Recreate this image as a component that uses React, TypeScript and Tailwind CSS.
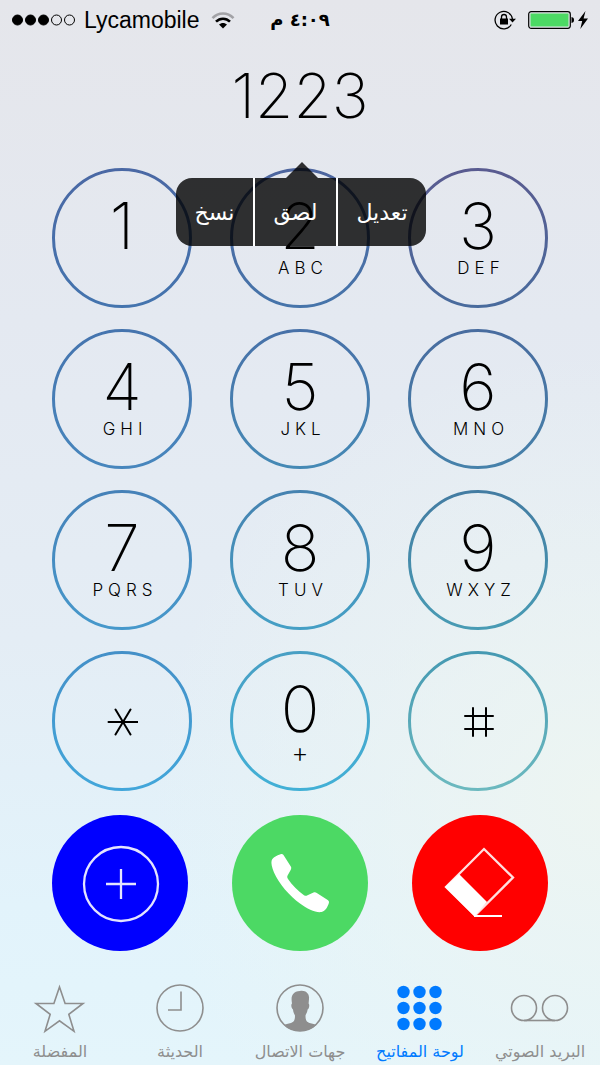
import clsx from 'clsx'
import type { ReactNode } from 'react'

type Key = {
  digit: string
  letters?: string
  top: string
  bottom: string
  label?: string
  symbol?: ReactNode
}

const StarSymbol = () => (
  <svg className="h-8 w-8" viewBox="0 0 32 32" stroke="currentColor" strokeWidth="2" strokeLinecap="round" aria-hidden="true">
    <path d="M2.5 17h29M9.500 4.500l15 25M24.500 4.500l-15 25" />
  </svg>
)

const HashSymbol = () => (
  <svg className="h-8 w-8" viewBox="0 0 32 32" stroke="currentColor" strokeWidth="2" strokeLinecap="round" aria-hidden="true">
    <path d="M3 11h28M3 24h28M11 3v28M24 3v28" />
  </svg>
)

const keys: Key[] = [
  { digit: '1', top: '#4a68a4', bottom: '#4474ae' },
  { digit: '2', letters: 'ABC', top: '#4d659e', bottom: '#4674aa' },
  { digit: '3', letters: 'DEF', top: '#595b90', bottom: '#496b9d' },
  { digit: '4', letters: 'GHI', top: '#4574ae', bottom: '#4786bd' },
  { digit: '5', letters: 'JKL', top: '#4771a8', bottom: '#4589b5' },
  { digit: '6', letters: 'MNO', top: '#486c9f', bottom: '#4681aa' },
  { digit: '7', letters: 'PQRS', top: '#4581b8', bottom: '#4698cb' },
  { digit: '8', letters: 'TUV', top: '#4582b0', bottom: '#459fc5' },
  { digit: '9', letters: 'WXYZ', top: '#437ca2', bottom: '#489bb4' },
  { digit: '*', label: 'star', top: '#4490c8', bottom: '#42a6da', symbol: <StarSymbol /> },
  { digit: '0', letters: '+', top: '#489fc4', bottom: '#42b0d6' },
  { digit: '#', label: 'hash', top: '#4599b2', bottom: '#6cb9bf', symbol: <HashSymbol /> },
]

function KeyButton({ item, index }: { item: Key; index: number }) {
  const id = `ring-${index}`
  return (
    <button
      type="button"
      aria-label={item.label}
      className="relative flex h-[140px] w-[140px] flex-col items-center rounded-full text-black"
    >
      <svg className="absolute inset-0 h-full w-full" viewBox="0 0 140 140" fill="none" aria-hidden="true">
        <defs>
          <linearGradient id={id} x1="0" y1="0" x2="0" y2="1">
            <stop offset="0" stopColor={item.top} />
            <stop offset="1" stopColor={item.bottom} />
          </linearGradient>
        </defs>
        <circle cx="70" cy="70" r="68.5" stroke={`url(#${id})`} strokeWidth="3" />
      </svg>
      {item.symbol ? (
        <span className="flex h-full items-center">{item.symbol}</span>
      ) : (
        <>
          <span className="mt-6 text-[64px] leading-[68px] font-extralight">{item.digit}</span>
          {item.letters === '+' ? (
            <span className="font-[Roboto] text-2xl leading-6 font-light">+</span>
          ) : (
            <span className="pl-1.5 text-[17px] leading-4 font-light tracking-[5px]">{item.letters}</span>
          )}
        </>
      )}
    </button>
  )
}

function StatusBar() {
  return (
    <header className="grid h-10 grid-cols-3 items-center px-3">
      <div className="flex items-center">
        <svg className="mr-2 h-3 w-16 shrink-0" viewBox="0 0 64 12" stroke="#000" aria-label="Signal strength">
          <circle cx="5.5" cy="6" r="5" />
          <circle cx="18.5" cy="6" r="5" />
          <circle cx="31.5" cy="6" r="5" />
          <circle cx="44.5" cy="6" r="5" fill="none" />
          <circle cx="57.5" cy="6" r="5" fill="none" />
        </svg>
        <span className="font-['Liberation_Sans'] text-[23px] leading-8">Lycamobile</span>
        <svg className="ml-3 h-[17px] w-6 shrink-0" viewBox="0 0 24 17" fill="none" aria-label="Wi-Fi">
          <path d="M1.5 6.2C7.5 0 16.5 0 22.5 6.2" stroke="#a2a2a6" strokeWidth="2.6" />
          <path d="M5 9.7C9 5.7 15 5.7 19 9.7" stroke="#000" strokeWidth="2.6" />
          <path d="M8 12.6C10.3 10.5 13.7 10.5 16 12.6L12 16.6Z" fill="#000" />
        </svg>
      </div>
      <time dir="rtl" className="text-center font-['DejaVu_Sans'] text-lg font-bold">
        ٤:٠٩ م
      </time>
      <div className="flex items-center justify-end">
        <svg className="mr-3 h-5 w-[22px]" viewBox="0 0 22 20" fill="none" aria-label="Rotation lock">
          <path d="M17.3 14.5A8.7 8.7 0 1 1 18.4 9" stroke="#000" strokeWidth="1.3" />
          <path d="M15 8.8h7l-3.5 3.6Z" fill="#000" />
          <rect x="6" y="8.5" width="8" height="6" fill="#000" />
          <path d="M7.5 9V7a2.5 2.5 0 0 1 5 0v2" stroke="#000" strokeWidth="1.3" />
        </svg>
        <svg className="h-[18px] w-[46px]" viewBox="0 0 46 18" fill="none" aria-label="Battery charged">
          <rect x=".7" y=".7" width="41.6" height="16.6" rx="2.5" stroke="#000" strokeWidth="1.2" />
          <rect x="2.5" y="2.5" width="38" height="13" fill="#4cd964" />
          <path d="M43.5 6c2 .3 2.5 1.5 2.5 3s-.5 2.7-2.5 3Z" fill="#000" />
        </svg>
        <svg className="ml-1 h-[18px] w-[10px]" viewBox="0 0 10 18" aria-label="Charging">
          <path d="M7.5 0 0 10h4.2L2.3 18 10 7.5H5.6Z" />
        </svg>
      </div>
    </header>
  )
}

function EditMenu() {
  const item = 'h-[68px] border-white bg-black/80 bg-clip-padding'
  return (
    <div
      role="menu"
      className="absolute top-[138px] left-1/2 z-10 flex -translate-x-1/2 pl-0.5 font-['DejaVu_Sans'] text-[22px] text-white"
    >
      <svg className="absolute -top-4 left-1/2 h-4 w-9 -translate-x-1/2" viewBox="0 0 36 16" aria-hidden="true">
        <path d="M4 16 20 0l16 16Z" fill="#000" fillOpacity=".8" />
      </svg>
      <button type="button" role="menuitem" className={clsx(item, 'w-[79px] rounded-l-2xl border-r-2')}>
        نسخ
      </button>
      <button type="button" role="menuitem" className={clsx(item, 'w-[83px] border-r-2')}>
        لصق
      </button>
      <button type="button" role="menuitem" className={clsx(item, 'w-[88px] rounded-r-2xl')}>
        تعديل
      </button>
    </div>
  )
}

const actionClass = 'flex h-[136px] w-[136px] items-center justify-center rounded-full text-white'

function Actions() {
  return (
    <div className="mt-6 flex justify-between px-[52px]">
      <button type="button" aria-label="Add contact" className={clsx(actionClass, 'bg-[#0000ff]')}>
        <svg className="h-20 w-20" viewBox="0 0 80 80" fill="none" stroke="#e4e4ff" strokeWidth="2.3">
          <circle cx="41" cy="41" r="37" />
          <path d="M26 41h30M41 26v30" />
        </svg>
      </button>
      <button type="button" aria-label="Call" className={clsx(actionClass, 'bg-[#4cd964]')}>
        <svg className="h-[60px] w-[60px]" viewBox="0 0 60 60" fill="currentColor">
          <path d="M10.5 1.3C12 .8 13 1.3 13.8 2.6L20.8 13.6C21.5 14.8 21.3 15.7 20.8 16.7L17.6 22.5C17 23.7 17.2 24.6 18 25.9C22 32 28 38 34 42.2C35.3 43 36.2 43 37.5 42.3L43.5 39.5C44.7 39 45.7 39.2 46.8 39.9L57.7 47C59 47.9 59.3 48.8 58.8 50.3C57.5 54 55.5 58.3 51.5 59C46 60 37.5 56 30 50.5C19.5 42.8 9 31 4 19.5C1.8 14.5 1 10 1.6 7.8C2.5 4.500 7 2.3 10.5 1.3Z" />
        </svg>
      </button>
      <button type="button" aria-label="Erase" className={clsx(actionClass, 'bg-[#ff0000]')}>
        <svg className="h-[72px] w-[72px]" viewBox="0 0 72 72" fill="none" stroke="#ffe0e0" strokeWidth="2.3">
          <path d="M40 2 69 30.500 31 68.500 2 40Z" />
          <path d="M15 27 43 55 30.500 69.500 1 40Z" fill="#fff" stroke="none" />
          <path d="M30 69h28" stroke="#fff" strokeWidth="2" />
        </svg>
      </button>
    </div>
  )
}

const tabs = [
  {
    label: 'المفضلة',
    icon: <path d="M23.500 3 29.1 19.5H47L32.8 30.3 38 47.300 23.500 36.8 9 47.300 14.2 30.3 0 19.5H17.9Z" />,
  },
  {
    label: 'الحديثة',
    icon: (
      <>
        <circle cx="24" cy="24" r="23" />
        <path d="M25 7.5v18.5H12" />
      </>
    ),
  },
  {
    label: 'جهات الاتصال',
    icon: (
      <>
        <circle cx="24" cy="24" r="23" />
        <path
          d="M24 7c5.5-1 9.7 2.5 9 8l-.4 4.5c1.3 1 .5 5-1 6-.3 3-1.6 4.5-2.1 6 0 4.5 1 6.500 4 7.5 3 .8 5.5 1.2 7 2C36 45 30 47 24 47S12 45 8 41c1.5-.8 4-1.2 7-2 3-1 4-3 4-7.5-.8-1.5-1.7-3-2-6-1.6-1-2.3-5-1-6-.8-5-.5-7.5 1.2-9.5C18.500 8 21 7 24 7Z"
          fill="currentColor"
          stroke="none"
        />
      </>
    ),
  },
  {
    label: 'لوحة المفاتيح',
    active: true,
    icon: (
      <g fill="currentColor" stroke="none">
        {[8, 24, 40].map((y) => [7.5, 23.5, 39.5].map((x) => <circle key={`${x}-${y}`} cx={x} cy={y} r="6.2" />))}
      </g>
    ),
  },
  {
    label: 'البريد الصوتي',
    icon: (
      <>
        <circle cx="8" cy="24" r="12.5" />
        <circle cx="39" cy="24" r="12.5" />
        <path d="M8 36.5h31" />
      </>
    ),
  },
]

function TabBar() {
  return (
    <nav className="mt-[33px] grid grid-cols-5">
      {tabs.map((tab) => (
        <a
          key={tab.label}
          href="#"
          aria-current={tab.active ? 'page' : undefined}
          className={clsx('flex flex-col items-center gap-2', tab.active ? 'text-[#007aff]' : 'text-[#8e8e8e]')}
        >
          <svg
            className="h-12 w-12 overflow-visible"
            viewBox="0 0 48 48"
            fill="none"
            stroke="currentColor"
            strokeWidth="1.6"
            aria-hidden="true"
          >
            {tab.icon}
          </svg>
          <span dir="rtl" className="font-['DejaVu_Sans'] text-base leading-6 whitespace-nowrap">
            {tab.label}
          </span>
        </a>
      ))}
    </nav>
  )
}

export default function App() {
  return (
    <main className="min-h-screen bg-[radial-gradient(circle_at_100%_75%,#edf5f2_0%,#edf5f200_45%),linear-gradient(to_bottom,#e5e6eb_0%,#e4e9f1_30%,#e4edf5_60%,#e2f3fb_85%,#e4f5fb_100%)] font-[Inter,sans-serif] text-black">
      <StatusBar />
      <div className="relative">
        <output className="block h-32 pt-4 text-center text-[62px] leading-[80px] font-extralight">1223</output>
        <EditMenu />
        <div className="grid grid-cols-[repeat(3,140px)] justify-between gap-y-[21px] px-[52px]">
          {keys.map((item, i) => (
            <KeyButton key={item.digit} item={item} index={i} />
          ))}
        </div>
      </div>
      <Actions />
      <TabBar />
    </main>
  )
}
